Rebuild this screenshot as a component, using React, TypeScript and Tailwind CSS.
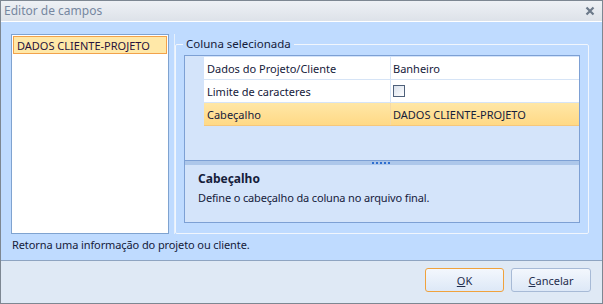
import React from "react";

const font = "font-['Noto_Sans',sans-serif]";

function Row({ name, children, selected }: { name: string; children: React.ReactNode; selected?: boolean }) {
  return (
    <div className="flex h-[23px]">
      <div className="w-[19px] shrink-0 bg-[#d4e4fa]" />
      <div
        className={
          "flex flex-1 border-b " +
          (selected
            ? "bg-gradient-to-b from-[#ffe7a6] to-[#ffd986] border-[#f6c77b]"
            : "bg-white border-[#d6e4f6]")
        }
      >
        <div
          className={
            "w-[187px] shrink-0 flex items-center pl-[3px] border-r " +
            (selected ? "border-[#f3d9a8]" : "border-[#d6e4f6]")
          }
        >
          {name}
        </div>
        <div className="flex-1 flex items-center pl-[2px]">{children}</div>
      </div>
    </div>
  );
}

export default function App() {
  return (
    <div
      className={
        "w-[603px] h-[304px] flex flex-col border border-[#7d8792] bg-[#dfe9f5] text-[11px] text-[#15203a] leading-none " +
        font
      }
    >
      {/* Title bar */}
      <div className="h-[21px] shrink-0 flex items-center justify-between pl-[3px] pr-[7px] bg-gradient-to-b from-[#eef1f5] to-[#dde2e9] border-b border-white">
        <span className="text-[#7687a0] text-[12px]">Editor de campos</span>
        <svg width="10" height="10" viewBox="0 0 10 10">
          <path d="M1.5 1.5 L8.5 8.5 M8.5 1.5 L1.5 8.5" stroke="#6c7989" strokeWidth="2.2" />
        </svg>
      </div>

      {/* Body */}
      <div className="h-[238px] shrink-0 bg-[#bfdbff] pl-[10px] pr-[13px] pt-[12px] flex flex-col">
        <div className="flex items-start">
          {/* left list */}
          <div className="w-[158px] h-[200px] shrink-0 border border-[#7fa3d0] bg-white p-[1px]">
            <div className="h-[18px] flex items-center pl-[3px] bg-[#ffe8a8] border border-[#f2a24a] text-[#28133c]">
              DADOS CLIENTE-PROJETO
            </div>
          </div>
          <div className="w-[6px] h-[200px] shrink-0 border-r border-[#e6f0fc]" />
          {/* group box */}
          <div className="relative mt-[10px] ml-0 flex-1 h-[190px] border border-[#f1f6fd] rounded-[2px] pt-[10px] px-[8px] pb-[10px]">
            <span className="absolute -top-[7px] left-[7px] px-[3px] bg-[#bfdbff] text-[11.5px]">Coluna selecionada</span>
            <div className="h-full border border-[#7da0d4] bg-[#d4e4fa] flex flex-col">
              <div className="pt-[1px]">
                <Row name="Dados do Projeto/Cliente">Banheiro</Row>
                <Row name="Limite de caracteres">
                  <div className="w-[12px] h-[12px] border border-[#4e607a] bg-gradient-to-br from-[#d9e1ec] to-white" />
                </Row>
                <Row name="Cabeçalho" selected>
                  DADOS CLIENTE-PROJETO
                </Row>
              </div>
              <div className="flex-1" />
              <div className="h-[5px] border-t border-[#7da0d4] bg-[#adc7ea] flex items-center justify-center">
                <div className="flex gap-[2px] mr-[2px]">
                  {[0, 1, 2, 3, 4].map((i) => (
                    <div key={i} className="w-[2px] h-[2px] bg-[#2f6fd0]" />
                  ))}
                </div>
              </div>
              <div className="h-[57px] pl-[13px] pt-[8px] flex flex-col gap-[7px]">
                <span className="font-bold text-[12px]">Cabeçalho</span>
                <span className="tracking-[-0.15px]">Define o cabeçalho da coluna no arquivo final.</span>
              </div>
            </div>
          </div>
        </div>
        <div className="mt-[5px] pl-[1px] tracking-[-0.1px]">Retorna uma informação do projeto ou cliente.</div>
      </div>

      {/* Footer */}
      <div className="flex-1 border-t border-[#8ea4c1] flex justify-end items-start gap-[7px] pt-[7px] pr-[11px]">
        <button className="w-[79px] h-[24px] rounded-[3px] border border-[#f0a23c] bg-gradient-to-b from-[#f3f7fd] to-[#dde8f7] text-[#1f2d4d] text-[11px]">
          <span className="underline">O</span>K
        </button>
        <button className="w-[80px] h-[24px] rounded-[3px] border border-[#a7bad6] bg-gradient-to-b from-[#f3f7fd] to-[#dde8f7] text-[#1f2d4d] text-[11px]">
          <span className="underline">C</span>ancelar
        </button>
      </div>
    </div>
  );
}
